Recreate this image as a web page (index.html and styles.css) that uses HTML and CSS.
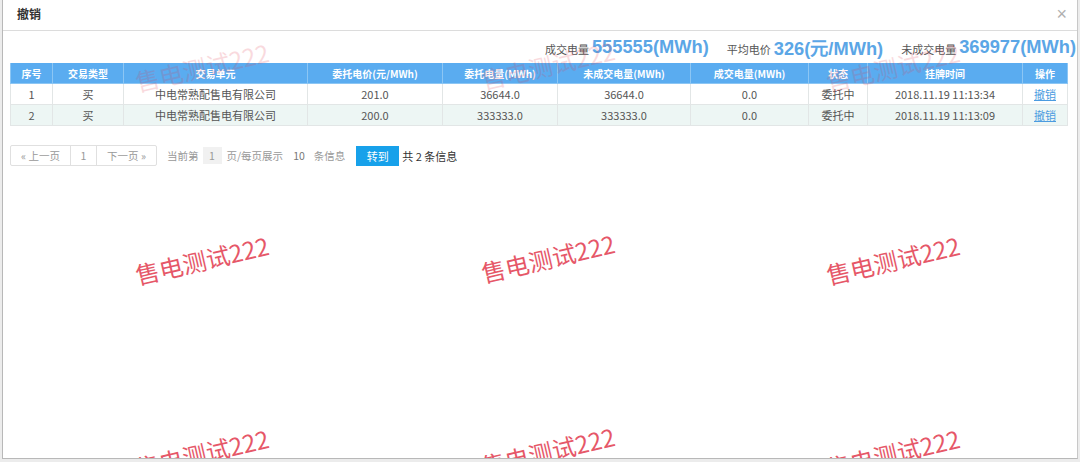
FILE: index.html
```html
<!DOCTYPE html>
<html lang="zh-CN">
<head>
<meta charset="utf-8">
<title>撤销</title>
<link rel="stylesheet" href="styles.css">
</head>
<body>
<div class="dialog">
  <div class="dlg-head">
    <span class="dlg-title">撤销</span>
    <span class="dlg-close">×</span>
  </div>
  <div class="dlg-body">
    <div class="summary">
      <span class="lbl">成交电量</span><span class="num">555555(MWh)</span>
      <span class="lbl">平均电价</span><span class="num">326(元/MWh)</span>
      <span class="lbl">未成交电量</span><span class="num">369977(MWh)</span>
    </div>
    <table class="grid">
      <colgroup>
        <col class="c1"><col class="c2"><col class="c3"><col class="c4"><col class="c5">
        <col class="c6"><col class="c7"><col class="c8"><col class="c9"><col class="c10">
      </colgroup>
      <thead>
        <tr>
          <th>序号</th><th>交易类型</th><th>交易单元</th><th>委托电价(元/MWh)</th><th>委托电量(MWh)</th>
          <th>未成交电量(MWh)</th><th>成交电量(MWh)</th><th>状态</th><th>挂牌时间</th><th>操作</th>
        </tr>
      </thead>
      <tbody>
        <tr>
          <td>1</td><td>买</td><td>中电常熟配售电有限公司</td><td>201.0</td><td>36644.0</td>
          <td>36644.0</td><td>0.0</td><td>委托中</td><td>2018.11.19 11:13:34</td><td><a class="op">撤销</a></td>
        </tr>
        <tr class="alt">
          <td>2</td><td>买</td><td>中电常熟配售电有限公司</td><td>200.0</td><td>333333.0</td>
          <td>333333.0</td><td>0.0</td><td>委托中</td><td>2018.11.19 11:13:09</td><td><a class="op">撤销</a></td>
        </tr>
      </tbody>
    </table>
    <div class="pager">
      <div class="pages">
        <span class="pg pg-prev">« 上一页</span>
        <span class="pg pg-num">1</span>
        <span class="pg pg-next">下一页 »</span>
      </div>
      <span class="ptxt t1">当前第</span>
      <span class="pinput">1</span>
      <span class="ptxt t2">页/每页展示</span>
      <span class="ptxt t3">10</span>
      <span class="ptxt t4">条信息</span>
      <span class="go">转到</span>
      <span class="total">共 2 条信息</span>
    </div>
  </div>
  <div class="wm-layer">
    <span class="wm faint" style="left:131px;top:52px">售电测试222</span>
    <span class="wm faint" style="left:477px;top:50px">售电测试222</span>
    <span class="wm faint" style="left:822px;top:52px">售电测试222</span>
    <span class="wm" style="left:131px;top:245px">售电测试222</span>
    <span class="wm" style="left:477px;top:243px">售电测试222</span>
    <span class="wm" style="left:822px;top:245px">售电测试222</span>
    <span class="wm" style="left:131px;top:438px">售电测试222</span>
    <span class="wm" style="left:477px;top:436px">售电测试222</span>
    <span class="wm" style="left:822px;top:438px">售电测试222</span>
  </div>
</div>
</body>
</html>
```

FILE: styles.css
```css
html, body {
  margin: 0;
  padding: 0;
}
body {
  width: 1080px;
  height: 462px;
  overflow: hidden;
  background: #ececec;
  font-family: "Noto Sans CJK SC", "Liberation Sans", sans-serif;
  color: #555;
}
.dialog {
  position: relative;
  margin-left: 2px;
  width: 1074px;
  height: 458px;
  background: #fff;
  border-left: 1px solid #b8b8b8;
  border-right: 1px solid #c8c8c8;
  border-bottom: 1px solid #b8b8b8;
  overflow: hidden;
}
.dlg-head {
  height: 30px;
  border-bottom: 1px solid #dcdcdc;
  display: flex;
  align-items: center;
  justify-content: space-between;
  padding: 0 10px 0 14px;
}
.dlg-title {
  font-size: 12px;
  font-weight: bold;
  color: #333;
  margin-top: -3px;
}
.dlg-close {
  font-family: "Liberation Sans", sans-serif;
  font-size: 18px;
  color: #b0b0b0;
  margin-top: -1px;
}
.dlg-body {
  padding: 0 0 0 7px;
}
.summary {
  height: 32px;
  display: flex;
  align-items: center;
  justify-content: flex-end;
  white-space: nowrap;
  margin-right: 1px;
}
.summary .lbl {
  font-size: 11px;
  color: #555;
  margin-left: 18px;
  margin-right: 3px;
  padding-top: 3px;
}
.summary .lbl:first-child {
  margin-left: 0;
}
.summary .num {
  font-family: "Liberation Sans", sans-serif;
  font-size: 18.3px;
  font-weight: bold;
  color: #5ba6e6;
}
.grid {
  border-collapse: collapse;
  table-layout: fixed;
  width: 1057px;
  font-size: 11px;
}
.c1 { width: 42px; }
.c2 { width: 71px; }
.c3 { width: 184px; }
.c4 { width: 135px; }
.c5 { width: 115px; }
.c6 { width: 133px; }
.c7 { width: 118px; }
.c8 { width: 59px; }
.c9 { width: 155px; }
.c10 { width: 45px; }
.grid th {
  height: 20px;
  padding: 0;
  background: #5aacf0;
  color: #fff;
  font-size: 10px;
  font-weight: bold;
  border: 1px solid #8cc6f4;
  border-top: none;
  text-align: center;
  white-space: nowrap;
  overflow: hidden;
}
.grid td {
  height: 20px;
  padding: 0;
  text-align: center;
  color: #555;
  border: 1px solid #e2e6e6;
  white-space: nowrap;
  overflow: hidden;
}
.grid tr.alt td {
  background: #edf6f4;
}
.op {
  color: #4b9be0;
  text-decoration: underline;
  cursor: pointer;
}
.pager {
  margin-top: 19px;
  display: flex;
  align-items: center;
  height: 21px;
  font-size: 10.5px;
  color: #999;
  white-space: nowrap;
}
.pages {
  display: flex;
  height: 19px;
  border: 1px solid #e0e0e0;
  border-radius: 2px;
}
.pg {
  display: flex;
  align-items: center;
  justify-content: center;
  color: #999;
}
.pg-prev { width: 59px; }
.pg-num { width: 25px; border-left: 1px solid #e0e0e0; border-right: 1px solid #e0e0e0; }
.pg-next { width: 59px; }
.ptxt.t1 { margin-left: 10px; }
.pinput {
  display: inline-flex;
  align-items: center;
  justify-content: center;
  width: 19px;
  height: 17px;
  background: #f1f1f1;
  margin: 0 5px 0 4px;
}
.ptxt.t3 { margin-left: 10px; color: #777; }
.ptxt.t4 { margin-left: 9px; }
.go {
  display: inline-flex;
  align-items: center;
  justify-content: center;
  width: 43px;
  height: 20px;
  margin-left: 11px;
  background: #17a1ea;
  color: #fff;
  font-size: 11px;
}
.total {
  margin-left: 3px;
  color: #333;
  font-size: 11px;
}
.wm-layer {
  position: absolute;
  left: 0;
  top: 0;
  right: 0;
  bottom: 0;
  pointer-events: none;
}
.wm {
  position: absolute;
  font-size: 24px;
  line-height: 30px;
  color: #e23a4e;
  opacity: 0.85;
  transform: rotate(-13deg);
  transform-origin: center;
  white-space: nowrap;
  font-family: "Noto Sans CJK SC", "Liberation Sans", sans-serif;
}
.wm.faint {
  opacity: 0.18;
}
```
